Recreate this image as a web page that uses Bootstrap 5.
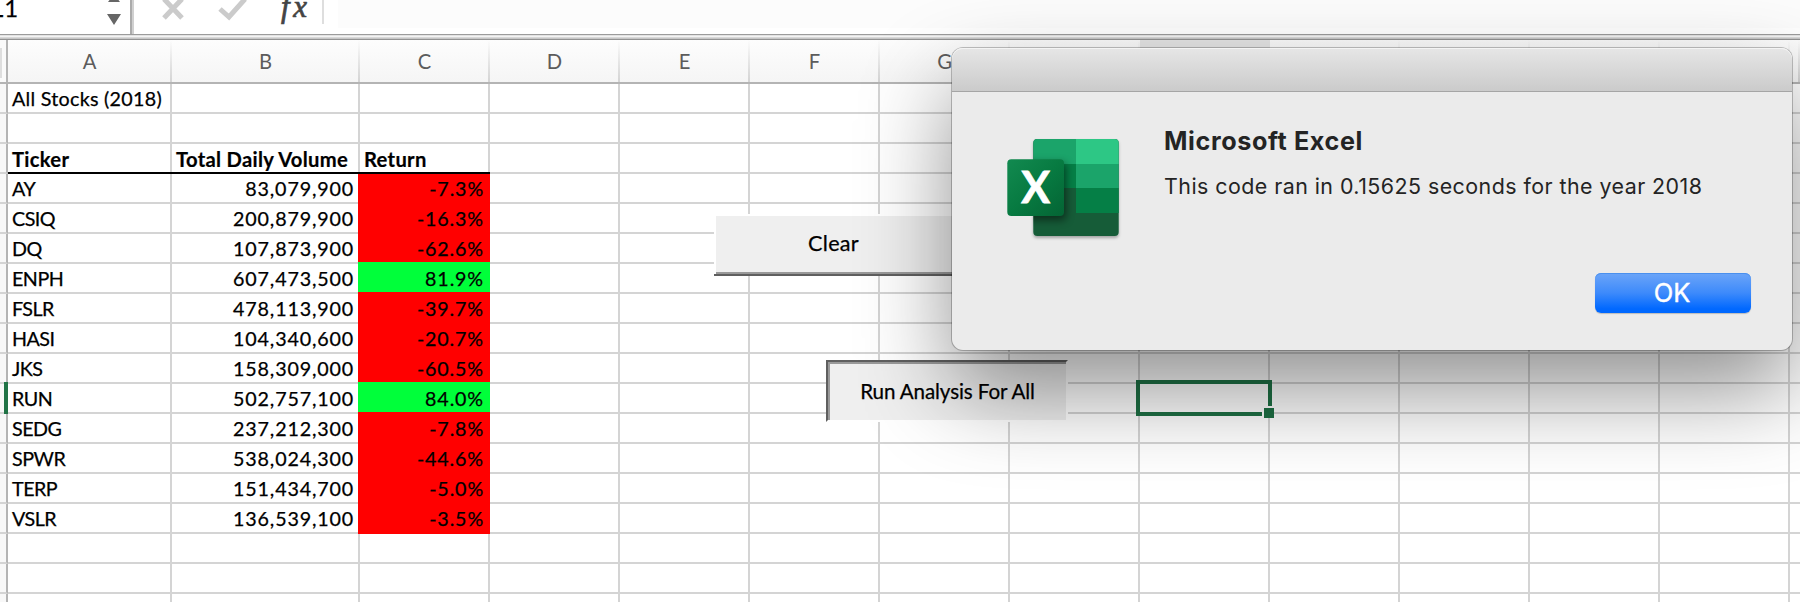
<!DOCTYPE html>
<html lang="en">
<head>
<meta charset="utf-8">
<title>Stock analysis</title>
<link href="https://cdn.jsdelivr.net/npm/bootstrap@5.3.0/dist/css/bootstrap.min.css" rel="stylesheet">
<style>
body{width:1800px;height:602px;overflow:hidden;background:#fff;font-family:Lato,"Liberation Sans",sans-serif;color:#000}
.formula{height:34px}
.namebox{width:134px;border-right:2px solid #d0d0d0;font-size:24px;line-height:16px;box-shadow:inset -2px 0 #ababab}
.namebox span{margin-left:-9px;letter-spacing:1px;-webkit-text-stroke:.25px}
.spin{margin-right:10px}
.tools{width:190px;border-right:2px solid #dedede;height:24px}
.field{margin-left:14px;height:28px;background:#fcfcfc}
.splitter{height:6px;background:linear-gradient(#9b9b9b 0 1px,#e3e3e3 1px 2px,#f4f4f4 2px 3px,#d9d9d9 3px 4px,#c6c6c6 4px 5px,#939393 5px 6px)}
.sheet{width:1800px;display:grid;grid-template-columns:8px 164px 188px repeat(11,130px) 10px;grid-template-rows:44px repeat(18,30px);font-size:19.7px}
.sheet>div{border-right:2px solid #d4d4d4;border-bottom:2px solid #d4d4d4;white-space:nowrap;line-height:30px;padding:0 4px;-webkit-text-stroke:.25px;position:relative}
.sheet>.lastcol{border-right:0}
.sheet>.sheettitle{letter-spacing:.28px}
.sheet>.ticker{letter-spacing:-.5px}
.sheet>.rowhead{border-right-color:#b4b4b4;background:#f8f8f8;padding:0}
.sheet>.corner{border-bottom-color:#b4b4b4;background:linear-gradient(#dedede,#dedede) 0 8px/2px 30px no-repeat,#fafafa}
.sheet>.colhead{border-bottom-color:#b4b4b4;border-right:0;text-align:center;line-height:42px;color:#5c5c5c;background:linear-gradient(#dcdcdc00,#d4d4d4) right/2px 100% no-repeat,linear-gradient(#fdfdfd,#f5f5f5);font-size:20.2px;-webkit-text-stroke:0;padding-right:5px}
.sheet>.current{background:#e6e6e6}
.sheet>.numeric{text-align:right;letter-spacing:.84px;padding-right:4px;line-height:29px}
.sheet>.black{letter-spacing:.3px;-webkit-text-stroke:.2px;font-size:20.2px}
.sheet>.black::after{content:"";position:absolute;left:0;right:-2px;bottom:-2px;height:2px;background:#000;z-index:2}
.sheet>.loss,.sheet>.gain{margin:-2px 0 0 -2px;padding-top:2px;background-color:#f00;border-color:#f00}
.sheet>.first{margin-top:0;padding-top:0}
.sheet>.gain{background-color:#00ff3a;border-color:#00ff3a}
.sheet>.here::before{content:"";position:absolute;left:4px;top:-2px;width:4px;height:32px;background:#217346;z-index:2}
.over{position:absolute}
.macro{background:#efefef;border:2px solid #fff;-webkit-text-stroke:.25px}
.clearbtn{left:714px;top:214px;width:244px;height:62px;border-bottom-color:#5f5f5f;border-left-color:#fff;border-right:0;box-shadow:inset 0 -2px #999;font-size:21.6px;padding:0 7px 4px 0;letter-spacing:.25px}
.clearbtn::before{content:"";position:absolute;left:-2px;bottom:-2px;width:2px;height:2px;background:#5f5f5f}
.runbtn{left:826px;top:360px;width:242px;height:62px;border-color:#5f5f5f #fff #fff #5f5f5f;box-shadow:inset 2px 2px #999;font-size:20.6px;padding:0 0 0 1px;letter-spacing:-.1px}
.selection{left:1136px;top:380px;width:136px;height:36px;border:4px solid #1e7145}
.handle{right:-6px;bottom:-6px;width:12px;height:12px;background:#1e7145;border:2px solid #fff;border-width:2px 0 0 2px}
.alertbox{left:952px;top:48px;width:840px;height:302px;background:#ebebeb;border-radius:11px;box-shadow:0 0 0 1px rgba(0,0,0,.23),0 40px 90px 0 rgba(0,0,0,.44);font-family:Inter,sans-serif;color:#242424}
.titlebar{height:44px;background:linear-gradient(#e6e6e6,#cbcbcb);border-bottom:1px solid #a5a5a5;border-radius:11px 11px 0 0;box-shadow:inset 0 1px #f4f4f4}
.alertbody{padding:33px 0 0 48px;height:181px}
.alerticon{margin-top:6px}
.copy{margin-left:38px}
.headline{font-size:25.2px;font-weight:700;line-height:32px;letter-spacing:.6px}
.message{font-size:21.4px;line-height:28px;letter-spacing:.46px;margin-top:15px}
.okbtn{width:156px;height:40px;margin-right:41px;border:0;border-radius:6px;color:#fff;font-size:25.5px;line-height:40px;padding:0 2px 0 0;-webkit-text-stroke:.4px;background:linear-gradient(#6ca5f8,#3d8afb 50%,#0068ff 90%);box-shadow:0 1px 1px #0003,inset 0 1px #4a90ee}
</style>
</head>
<body class="position-relative">
<div class="formula d-flex">
 <div class="namebox d-flex justify-content-between flex-shrink-0"><span>L1</span>
  <svg class="spin" width="16" height="28"><path d="M2 2h12L8-6zM1 14h14L8 25z" fill="#666"/></svg>
 </div>
 <div class="tools flex-shrink-0">
  <svg width="186" height="28"><g fill="none" stroke="#cbcbcb" stroke-width="5"><path d="M30-1 48 18M48-1 30 18"/><path d="M86 9l9 8L111-1"/></g>
   <text x="147" y="17" font-family="Liberation Serif,serif" font-style="italic" font-size="31" fill="#444" stroke="#444" stroke-width=".7" textLength="26">fx</text></svg>
 </div>
 <div class="field flex-grow-1"></div>
</div>
<div class="splitter"></div>
<div class="sheet" id="sheet"></div>
<button class="over macro clearbtn">Clear</button>
<button class="over macro runbtn">Run Analysis For All</button>
<div class="over selection"><div class="over handle"></div></div>
<div class="over alertbox">
 <div class="titlebar"></div>
 <div class="alertbody d-flex align-items-start">
  <svg class="alerticon" width="126" height="116" viewBox="1000 131 126 116">
   <defs><linearGradient id="front" x1="0" y1="0" x2="1" y2="1"><stop offset="0" stop-color="#128a50"/><stop offset=".5" stop-color="#077a41"/><stop offset="1" stop-color="#046434"/></linearGradient>
   <clipPath id="page"><rect x="1033.300" y="139" width="85.400" height="97" rx="4"/></clipPath>
   <filter id="soft" x="-20%" y="-20%" width="140%" height="150%"><feDropShadow dx="0" dy="2" stdDeviation="1.500" flood-opacity=".3"/></filter>
   <filter id="deep" x="-30%" y="-30%" width="160%" height="170%"><feGaussianBlur stdDeviation="4"/></filter></defs>
   <rect x="1033.300" y="139" width="85.400" height="97" rx="4" fill="#155c39" filter="url(#soft)"/>
   <g clip-path="url(#page)"><path d="M1033 139h43v25h-43zM1076 164h43v24h-43z" fill="#1ba46a"/><path d="M1076 139h43v25h-43z" fill="#2dc785"/><path d="M1033 164h43v24h-43zM1076 188h43v25h-43z" fill="#057f46"/>
   <rect x="1009" y="163" width="57" height="57" rx="4" fill="#000" opacity=".5" filter="url(#deep)"/></g>
   <rect x="1007.300" y="159.300" width="56.700" height="56.700" rx="4" fill="url(#front)"/>
   <text x="1035.700" y="203" text-anchor="middle" font-family="Lato" font-weight="700" font-size="43" fill="#fff" stroke="#fff" stroke-width=".8">X</text>
  </svg>
  <div class="copy"><div class="headline">Microsoft Excel</div><div class="message text-nowrap">This code ran in 0.15625 seconds for the year 2018</div></div>
 </div>
 <div class="d-flex justify-content-end"><button class="okbtn">OK</button></div>
</div>
<script>
const rows=[["All Stocks (2018)"],[],["Ticker","Total Daily Volume","Return"],["AY","83,079,900","-7.3%"],["CSIQ","200,879,900","-16.3%"],["DQ","107,873,900","-62.6%"],["ENPH","607,473,500","81.9%"],["FSLR","478,113,900","-39.7%"],["HASI","104,340,600","-20.7%"],["JKS","158,309,000","-60.5%"],["RUN","502,757,100","84.0%"],["SEDG","237,212,300","-7.8%"],["SPWR","538,024,300","-44.6%"],["TERP","151,434,700","-5.0%"],["VSLR","136,539,100","-3.5%"],[],[],[]];
let html='<div class="rowhead corner"></div>'+[..."ABCDEFGHIJKLM",""].map(c=>`<div class="colhead ${c==='I'?'current':''}">${c}</div>`).join('');
rows.forEach((r,i)=>{
  html+=`<div class="rowhead ${i===10?'here':''}"></div>`;
  for(let c=0;c<14;c++){
    const data=i>2&&i<15;
    let k='';
    if(i===0&&c===0)k='sheettitle';
    if(i===2&&c<3)k='fw-bold black';
    if(data&&c===0)k='ticker';
    if(data&&(c===1||c===2))k='numeric';
    if(data&&c===2)k+=r[2][0]==='-'?' loss':' gain';
    if(i===3&&c===2)k+=' first';
    if(c===13)k+=' lastcol';
    html+=`<div class="${k}">${r[c]||''}</div>`;
  }
});
document.getElementById('sheet').innerHTML=html;
</script>
<script src="https://cdn.jsdelivr.net/npm/bootstrap@5.3.0/dist/js/bootstrap.bundle.min.js"></script>
</body>
</html>
